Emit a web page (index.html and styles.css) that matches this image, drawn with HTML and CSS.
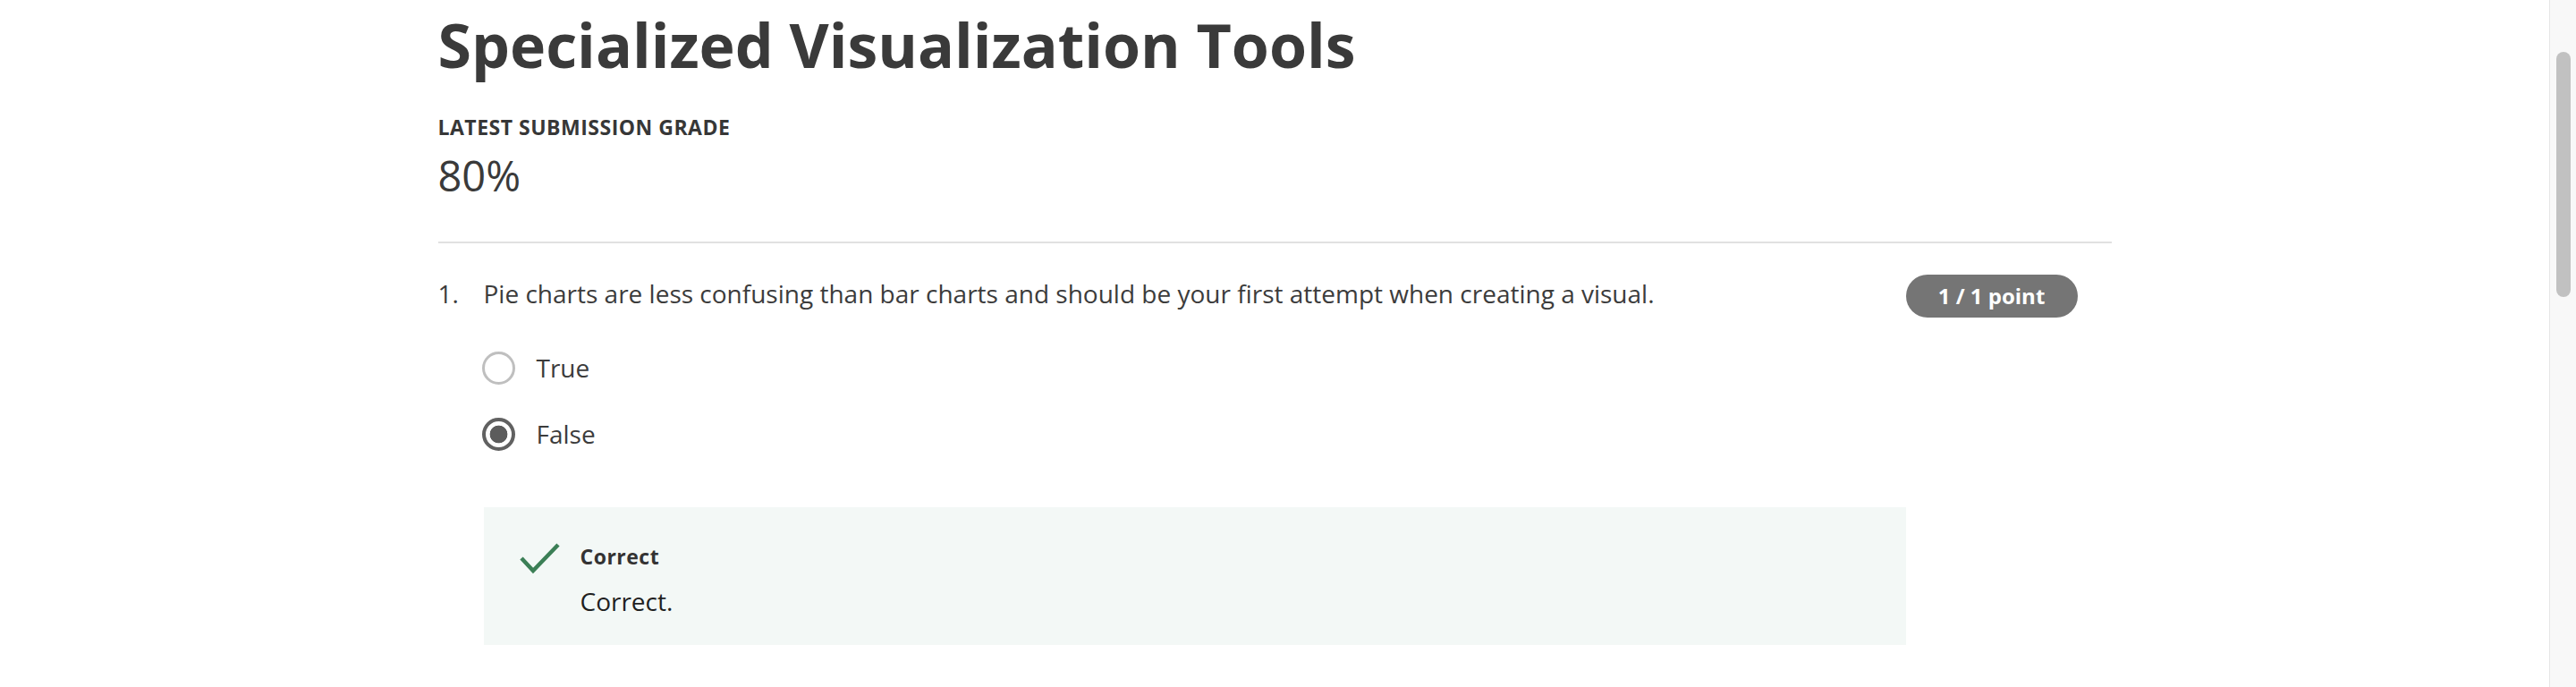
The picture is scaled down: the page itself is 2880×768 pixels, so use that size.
FILE: index.html
```html
<!DOCTYPE html>
<html lang="en">
<head>
<meta charset="utf-8">
<title>Specialized Visualization Tools</title>
<link rel="stylesheet" href="styles.css">
</head>
<body>
<div class="app">
  <main class="main">
    <div class="content">
      <h1 class="title">Specialized Visualization Tools</h1>
      <div class="grade-label">LATEST SUBMISSION GRADE</div>
      <div class="grade-value">80%</div>
      <hr class="divider">
      <section class="question">
        <div class="qnum">1.</div>
        <div class="qbody">
          <p class="qtext">Pie charts are less confusing than bar charts and should be your first attempt when creating a visual.</p>
          <div class="options">
            <div class="option">
              <span class="radio"></span>
              <span class="option-text">True</span>
            </div>
            <div class="option">
              <span class="radio checked"></span>
              <span class="option-text">False</span>
            </div>
          </div>
          <div class="feedback">
            <svg class="check" width="46" height="36" viewBox="0 0 46 36" aria-hidden="true">
              <polyline points="2,17 15,31 43,2" fill="none" stroke="#3b7f56" stroke-width="4.5" stroke-linecap="butt" stroke-linejoin="miter"/>
            </svg>
            <div class="feedback-body">
              <div class="feedback-label">Correct</div>
              <div class="feedback-text">Correct.</div>
            </div>
          </div>
        </div>
        <div class="qside">
          <span class="badge">1 / 1 point</span>
        </div>
      </section>
    </div>
  </main>
  <div class="scrollbar"><div class="thumb"></div></div>
</div>
</body>
</html>
```
FILE: styles.css
```css
html, body {
  margin: 0;
  padding: 0;
  height: 768px;
  overflow: hidden;
  background: #ffffff;
}
body {
  font-family: "Open Sans", "Noto Sans", "Liberation Sans", sans-serif;
  color: #373737;
}
.app {
  display: flex;
  height: 768px;
}
.main {
  flex: 1;
  min-width: 0;
}
.content {
  width: 1871px;
  margin: 0 auto;
  padding-top: 10px;
}
.title {
  margin: 0;
  font-size: 68px;
  line-height: 80px;
  font-weight: 700;
  color: #3a3a3a;
}
.grade-label {
  margin-top: 37px;
  font-size: 23px;
  line-height: 30px;
  font-weight: 700;
  letter-spacing: 0.5px;
  color: #373737;
}
.grade-value {
  margin-top: 11px;
  font-size: 47px;
  line-height: 56px;
  font-weight: 400;
  color: #3a3a3a;
}
.divider {
  margin: 46px 0 0;
  border: 0;
  height: 2px;
  background: #e1e1e1;
}
.question {
  display: flex;
  margin-top: 35px;
}
.qnum {
  width: 51px;
  flex: none;
  font-size: 28px;
  line-height: 42px;
  color: #3c3c3c;
}
.qbody {
  flex: 1;
  min-width: 0;
}
.qtext {
  margin: 0;
  font-size: 28px;
  line-height: 42px;
  color: #3c3c3c;
}
.options {
  margin-top: 25px;
}
.option {
  display: flex;
  align-items: center;
  height: 74px;
  gap: 24px;
}
.radio {
  box-sizing: border-box;
  width: 37px;
  height: 37px;
  margin-left: -2px;
  border-radius: 50%;
  border: 3px solid #bfbfbf;
  background: #ffffff;
  flex: none;
}
.radio.checked {
  border: 4px solid #616161;
  background: radial-gradient(circle, #5c5c5c 0 9.5px, #ffffff 10.2px);
}
.option-text {
  font-size: 28px;
  line-height: 40px;
  color: #3c3c3c;
}
.feedback {
  display: flex;
  align-items: flex-start;
  gap: 22px;
  margin-top: 45px;
  padding: 40px 40px 29px 40px;
  background: #f3f8f6;
}
.check {
  flex: none;
  display: block;
}
.feedback-label {
  font-size: 23px;
  line-height: 30px;
  font-weight: 700;
  letter-spacing: 0.5px;
  color: #333333;
}
.feedback-text {
  margin-top: 15px;
  font-size: 28px;
  line-height: 40px;
  color: #1f1f1f;
}
.qside {
  width: 230px;
  flex: none;
}
.badge {
  display: inline-block;
  width: 192px;
  height: 48px;
  border-radius: 24px;
  background: #757575;
  color: #ffffff;
  font-size: 24px;
  line-height: 48px;
  font-weight: 700;
  text-align: center;
}
.scrollbar {
  width: 29px;
  flex: none;
  background: #f8f8f8;
  border-left: 1px solid #e6e6e6;
}
.thumb {
  width: 16px;
  height: 274px;
  margin: 58px 0 0 7px;
  border-radius: 8px;
  background: #c1c1c1;
}
```
